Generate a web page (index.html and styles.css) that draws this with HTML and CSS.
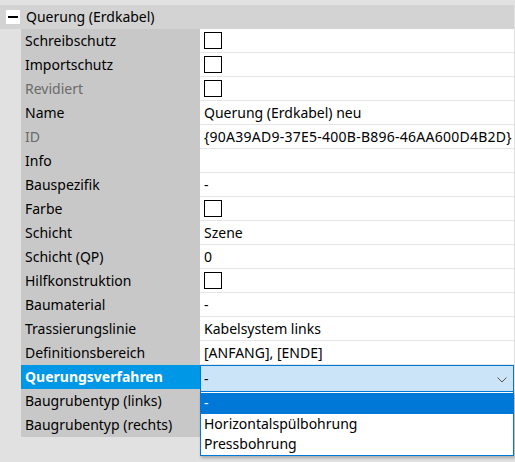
FILE: index.html
```html
<!DOCTYPE html>
<html>
<head>
<meta charset="utf-8">
<link rel="stylesheet" href="styles.css">
</head>
<body>
<div class="pg">
  <div class="hdr">
    <span class="toggle"><span class="bar"></span></span>
    <span class="htitle">Querung (Erdkabel)</span>
  </div>
  <div class="grid">
    <div class="lab">Schreibschutz</div><div class="val"><span class="cb"></span></div>
    <div class="lab">Importschutz</div><div class="val"><span class="cb"></span></div>
    <div class="lab dis">Revidiert</div><div class="val"><span class="cb"></span></div>
    <div class="lab">Name</div><div class="val">Querung (Erdkabel) neu</div>
    <div class="lab dis">ID</div><div class="val id">{90A39AD9-37E5-400B-B896-46AA600D4B2D}</div>
    <div class="lab">Info</div><div class="val"></div>
    <div class="lab">Bauspezifik</div><div class="val">-</div>
    <div class="lab">Farbe</div><div class="val"><span class="cb"></span></div>
    <div class="lab">Schicht</div><div class="val">Szene</div>
    <div class="lab">Schicht (QP)</div><div class="val">0</div>
    <div class="lab">Hilfkonstruktion</div><div class="val"><span class="cb"></span></div>
    <div class="lab">Baumaterial</div><div class="val">-</div>
    <div class="lab">Trassierungslinie</div><div class="val">Kabelsystem links</div>
    <div class="lab">Definitionsbereich</div><div class="val">[ANFANG], [ENDE]</div>
    <div class="lab sel">Querungsverfahren</div>
    <div class="val combo-cell">
      <div class="combo">
        <span>-</span>
        <svg class="chev" width="10" height="6" viewBox="0 0 10 6"><path d="M0.5 0.5 L5 5 L9.5 0.5" fill="none" stroke="#555" stroke-width="1"/></svg>
      </div>
      <div class="list">
        <div class="item hi">-</div>
        <div class="item">Horizontalspülbohrung</div>
        <div class="item">Pressbohrung</div>
      </div>
    </div>
    <div class="lab">Baugrubentyp (links)</div><div class="val"></div>
    <div class="lab">Baugrubentyp (rechts)</div><div class="val"></div>
  </div>
</div>
</body>
</html>
```
FILE: styles.css
```css
html, body {
  margin: 0;
  padding: 0;
  background: #e1e1e1;
  width: 515px;
  height: 462px;
  overflow: hidden;
}
.pg {
  font-family: "Noto Sans", "Open Sans", sans-serif;
  font-size: 14px;
  color: #000;
  padding-top: 5px;
  width: 514px;
}
.hdr {
  height: 24px;
  box-sizing: border-box;
  padding-bottom: 1px;
  background: #d3d3d3;
  display: flex;
  align-items: center;
}
.toggle {
  width: 14px;
  height: 14px;
  background: #fff;
  margin-left: 6px;
  display: flex;
  align-items: center;
  justify-content: center;
}
.bar {
  width: 10px;
  height: 2px;
  background: #000;
}
.htitle {
  margin-left: 6px;
}
.grid {
  margin-left: 21px;
  display: grid;
  grid-template-columns: 179px 1fr;
  grid-auto-rows: 24px;
}
.lab {
  background: #c8c8c8;
  padding-left: 4px;
  padding-bottom: 2px;
  display: flex;
  align-items: center;
  white-space: nowrap;
}
.lab.dis { color: #6a6a6a; }
.lab.sel {
  background: #0097e6;
  color: #fff;
  font-weight: bold;
}
.val {
  background: #fff;
  border-bottom: 1px solid #e6e6e6;
  padding-left: 4px;
  padding-bottom: 1px;
  display: flex;
  align-items: center;
  white-space: nowrap;
  overflow: hidden;
}
.val.id {
  letter-spacing: 0.25px;
}
.cb {
  border: 1px solid #000;
  box-sizing: border-box;
  width: 18px;
  height: 17px;
}
.combo-cell {
  position: relative;
  padding: 0;
  border-bottom: none;
  overflow: visible;
  background: #fff;
}
.combo {
  position: absolute;
  left: 0;
  top: 0;
  right: 0;
  height: 27px;
  box-sizing: border-box;
  border: 1px solid #0078d7;
  background: #cce4f7;
  display: flex;
  align-items: center;
  padding-left: 3px;
  padding-bottom: 1px;
  z-index: 2;
}
.chev {
  position: absolute;
  right: 6px;
  top: 11px;
}
.list {
  position: absolute;
  left: 0;
  right: 0;
  top: 26px;
  border: 1px solid #0078d7;
  background: #fff;
  box-shadow: 1px 2px 3px rgba(0,0,0,0.25);
  z-index: 3;
  padding-top: 1px;
}
.item {
  height: 20.5px;
  padding-left: 3px;
  padding-bottom: 1px;
  box-sizing: border-box;
  display: flex;
  align-items: center;
}
.item.hi {
  background: #0078d7;
  color: #fff;
}
```
